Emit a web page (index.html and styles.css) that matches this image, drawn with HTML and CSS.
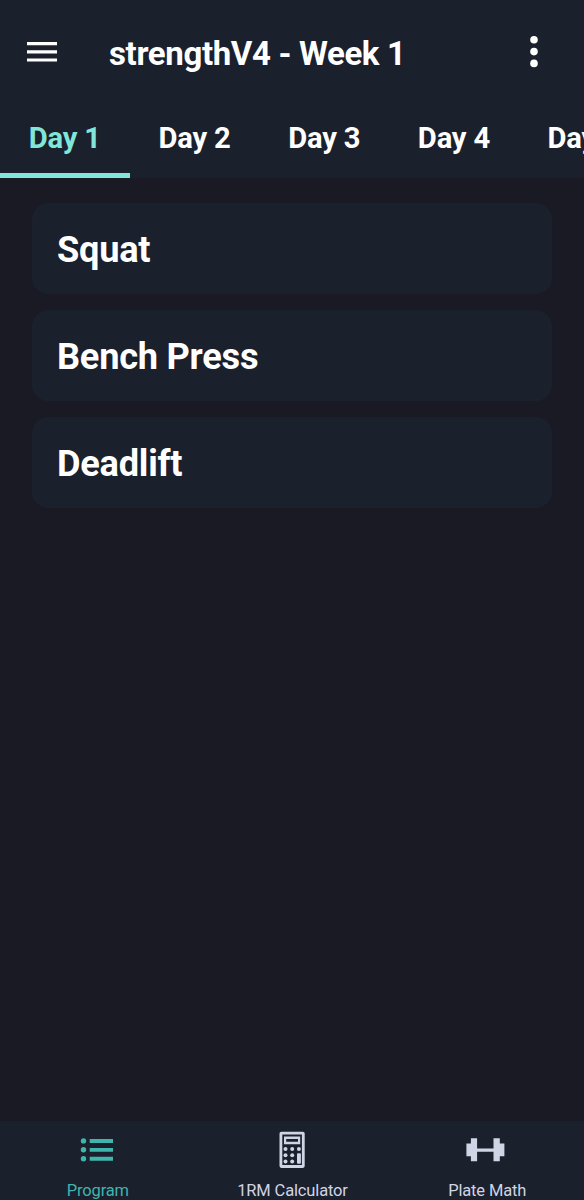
FILE: index.html
```html
<!DOCTYPE html>
<html lang="en">
<head>
<meta charset="utf-8">
<title>strengthV4 - Week 1</title>
<link rel="stylesheet" href="styles.css">
</head>
<body>
<div class="app">
  <header class="appbar">
    <svg class="menu" width="30" height="20" viewBox="0 0 30 20"><path d="M0 0h30v3.200H0zM0 8.200h30v3.200H0zM0 16.400h30v3.200H0z"/></svg>
    <h1 class="title">strengthV4 - Week 1</h1>
    <svg class="more" width="8" height="32" viewBox="0 0 8 32"><circle cx="4" cy="3.800" r="3.800"/><circle cx="4" cy="15.600" r="3.800"/><circle cx="4" cy="27.400" r="3.800"/></svg>
  </header>
  <nav class="tabs">
    <span class="tab active">Day 1</span><span class="tab">Day 2</span><span class="tab">Day 3</span><span class="tab">Day 4</span><span class="tab">Day 5</span>
  </nav>
  <main class="list">
    <section class="card">Squat</section>
    <section class="card">Bench Press</section>
    <section class="card">Deadlift</section>
  </main>
  <footer class="bottom">
    <div class="item selected">
      <svg width="40" height="40" viewBox="0 0 40 40"><path d="M12.700 9h23.300v3.900H12.700zM12.700 17.900h23.300v3.900H12.700zM12.700 26.800h23.300v3.900H12.700z"/><circle cx="6.500" cy="10.900" r="2.700"/><circle cx="6.500" cy="19.800" r="2.700"/><circle cx="6.500" cy="28.700" r="2.700"/></svg>
      <span>Program</span>
    </div>
    <div class="item">
      <svg width="40" height="40" viewBox="0 0 40 40"><path fill-rule="evenodd" d="M9.300 1.700h21.600q1.800 0 1.800 1.800v32.600q0 1.800-1.800 1.800H9.300q-1.800 0-1.800-1.800V3.500q0-1.800 1.800-1.800zM10.300 4.500v30.600h19.600V4.500zM12 6.500h16.200v7.800H12zM14.200 9v2.800H26V9z"/><circle cx="13.500" cy="19" r="2"/><circle cx="20.200" cy="19" r="2"/><circle cx="26.900" cy="19" r="2"/><circle cx="13.500" cy="25.300" r="2"/><circle cx="20.200" cy="25.300" r="2"/><circle cx="13.500" cy="31.600" r="2"/><circle cx="20.200" cy="31.600" r="2"/><rect x="25" y="23.300" width="3.900" height="10.400" rx="1"/></svg>
      <span>1RM Calculator</span>
    </div>
    <div class="item">
      <svg width="40" height="40" viewBox="0 0 40 40"><path d="M-.6 13.500h4.500V8.200h6.200v10.200h16.400V8.200h6.300v5.300h4.600v12.800h-4.600v5h-6.300V21.700H10.100v9.600H3.900v-5H-.6z"/></svg>
      <span>Plate Math</span>
    </div>
  </footer>
</div>
</body>
</html>
```
FILE: styles.css
```css
body { margin: 0; }
.app { width: 584px; height: 1200px; display: flex; flex-direction: column; overflow: hidden; background: #191a23; color: #fff; font-family: Roboto, sans-serif; }
.appbar { height: 104px; box-sizing: border-box; flex: none; display: flex; align-items: center; padding: 0 46px 0 27px; background: #1b202d; }
.appbar svg { fill: #fff; flex: none; }
.title { margin: 4px 0 0 52px; flex: 1; font-size: 33px; font-weight: 700; letter-spacing: -.36px; line-height: 40px; white-space: nowrap; }
.tabs { height: 74px; flex: none; display: flex; overflow: hidden; background: #1b202d; }
.tab { flex: none; width: 129.700px; box-sizing: border-box; border-bottom: 5px solid transparent; text-align: center; font-size: 29.200px; font-weight: 700; letter-spacing: -.2px; line-height: 68px; white-space: nowrap; }
.active { color: #81e6d9; border-color: #81e6d9; }
.list { flex: 1; padding: 25px 32px; display: flex; flex-direction: column; gap: 16px; }
.card { height: 91px; box-sizing: border-box; border-radius: 16px; padding: 0 25px; background: #1b202d; font-size: 36.200px; font-weight: 700; letter-spacing: -.25px; line-height: 94px; }
.bottom { height: 79px; flex: none; display: grid; grid-template-columns: repeat(3, 1fr); background: #1b202d; }
.item { display: flex; flex-direction: column; align-items: center; padding-top: 9px; color: #d0d4e4; font-size: 16.500px; letter-spacing: -.15px; line-height: 20px; white-space: nowrap; }
.item svg { fill: currentColor; overflow: visible; }
.item span { margin-top: 11px; padding-left: 1px; }
.selected { color: #3fb5ae; }
```
